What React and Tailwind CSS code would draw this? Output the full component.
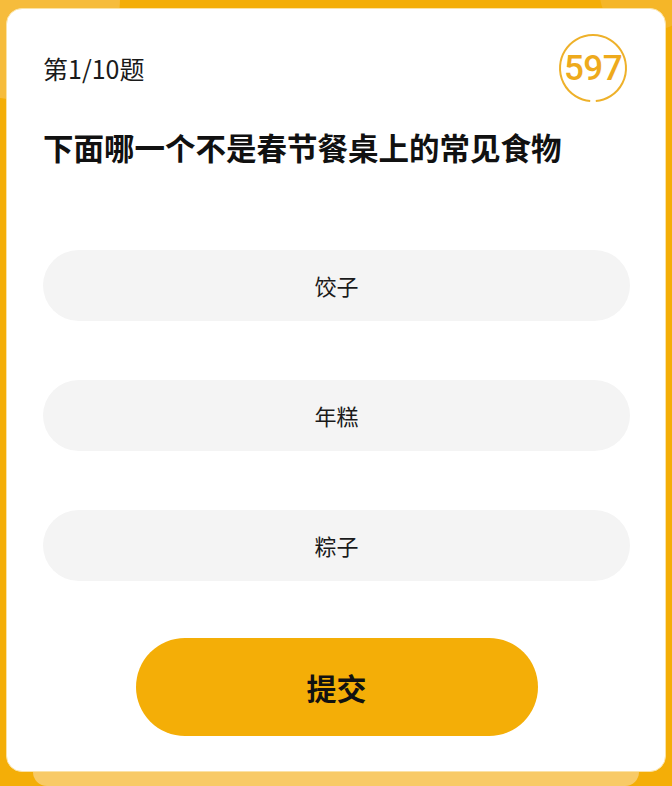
import React from "react";

const options = ["饺子", "年糕", "粽子"];

// Countdown ring with a small break at the bottom
const Timer = ({ value }) => (
  <div className="relative w-[70px] h-[70px] flex items-center justify-center">
    <svg className="absolute inset-0" width="70" height="70" viewBox="0 0 70 70">
      <path
        d="M 32.2 68 A 33 33 0 1 1 37.8 68"
        fill="none"
        stroke="#eeb12a"
        strokeWidth="2"
      />
    </svg>
    <span className="relative text-[35px] leading-none font-medium text-[#eeaa1c] font-['Roboto',sans-serif] tracking-[-0.5px]">
      {value}
    </span>
  </div>
);

export default function App() {
  return (
    <div className="relative w-[672px] h-[786px] overflow-hidden bg-[#f4ae07] flex flex-col font-['Noto_Sans_CJK_SC',sans-serif]">
      {/* decorative bubbles */}
      <div className="absolute -left-[80px] -top-[100px] w-[200px] h-[200px] rounded-full bg-[#f6bc3c]"></div>
      <div className="absolute left-[600px] -top-[40px] w-[90px] h-[70px] rounded-full bg-[#f5b628]"></div>

      <div className="relative mt-[8px] mx-[6px] h-[764px] bg-white rounded-[16px] border border-[#fbe3a6] pl-[36px] pr-[35px] pt-[24px] flex flex-col">
        <div className="flex items-center justify-between">
          <span className="text-[25px] leading-none text-[#1a1a1a]">第1/10题</span>
          <div className="mr-[2px]">
            <Timer value={597} />
          </div>
        </div>

        <h1 className="mt-[23px] text-[30.5px] leading-[42px] font-bold text-[#111]">
          下面哪一个不是春节餐桌上的常见食物
        </h1>

        <div className="mt-[82px] flex flex-col gap-[59px]">
          {options.map((o) => (
            <button
              key={o}
              className="h-[71px] w-full rounded-full bg-[#f4f4f4] text-[22px] text-[#1a1a1a] flex items-center justify-center"
            >
              {o}
            </button>
          ))}
        </div>

        <button className="mt-[57px] mx-auto w-[402px] h-[98px] rounded-full bg-[#f4ae07] text-[30px] font-bold text-[#111] flex items-center justify-center">
          提交
        </button>
      </div>

      <div className="mx-[33px] flex-1 bg-[#f8ca66] rounded-b-[16px]"></div>
    </div>
  );
}
